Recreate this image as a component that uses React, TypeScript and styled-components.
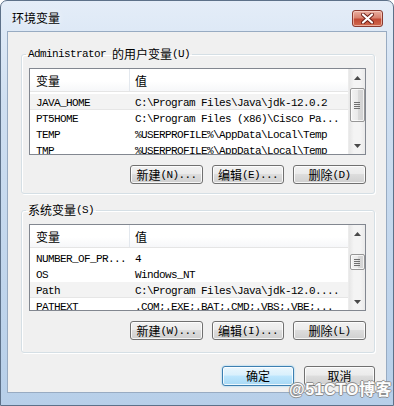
import React from 'react';
import styled, { createGlobalStyle } from 'styled-components';

const GlobalStyle = createGlobalStyle`
  html, body {
    margin: 0;
    padding: 0;
    background: #ffffff;
  }
  body {
    font-family: "Liberation Mono", "Noto Sans CJK SC", monospace;
    color: #000;
  }
`;

interface VarRow {
  name: string;
  value: string;
  shaded?: boolean;
}

const userVars: VarRow[] = [
  { name: 'JAVA_HOME', value: 'C:\\Program Files\\Java\\jdk-12.0.2', shaded: true },
  { name: 'PT5HOME', value: 'C:\\Program Files (x86)\\Cisco Pa...' },
  { name: 'TEMP', value: '%USERPROFILE%\\AppData\\Local\\Temp' },
  { name: 'TMP', value: '%USERPROFILE%\\AppData\\Local\\Temp' },
];

const systemVars: VarRow[] = [
  { name: 'NUMBER_OF_PR...', value: '4' },
  { name: 'OS', value: 'Windows_NT' },
  { name: 'Path', value: 'C:\\Program Files\\Java\\jdk-12.0....', shaded: true },
  { name: 'PATHEXT', value: '.COM;.EXE;.BAT;.CMD;.VBS;.VBE;...' },
];

// split a label into latin / han runs so each gets the right font
const splitRuns = (text: string) => {
  const runs: { han: boolean; s: string }[] = [];
  for (const ch of text) {
    const han = /[\u3000-\u9fff\uff00-\uffef]/.test(ch);
    const last = runs[runs.length - 1];
    if (last && last.han === han) last.s += ch;
    else runs.push({ han, s: ch });
  }
  return runs;
};

const Mixed = ({ text }: { text: string }): JSX.Element => (
  <>
    {splitRuns(text).map((r, i) =>
      r.han ? <Han key={i}>{r.s}</Han> : <Latin key={i}>{r.s}</Latin>,
    )}
  </>
);

const ScrollBar = ({ offset, size }: { offset: number; size: number }): JSX.Element => (
  <StyledScrollBar>
    <ArrowBox>
      <svg width="7" height="4" viewBox="0 0 7 4">
        <path d="M0 4 L3.5 0 L7 4 Z" fill="#4a4a4a" />
      </svg>
    </ArrowBox>
    <Track>
      <Thumb style={{ marginTop: offset, height: size }}>
        <svg width="6" height="7" viewBox="0 0 6 7">
          <path d="M0 0.5 H6 M0 2.5 H6 M0 4.5 H6 M0 6.5 H6" stroke="#6f6f6f" strokeWidth="1" />
        </svg>
      </Thumb>
    </Track>
    <ArrowBox>
      <svg width="7" height="4" viewBox="0 0 7 4">
        <path d="M0 0 L7 0 L3.5 4 Z" fill="#4a4a4a" />
      </svg>
    </ArrowBox>
  </StyledScrollBar>
);

interface VarListProps {
  rows: VarRow[];
  thumbOffset: number;
  thumbSize: number;
}

const VarList = ({ rows, thumbOffset, thumbSize }: VarListProps): JSX.Element => (
  <ListView>
    <ListBody>
      <HeaderRow>
        <HeaderCell $key>
          <Han>变量</Han>
        </HeaderCell>
        <HeaderCell>
          <Han>值</Han>
        </HeaderCell>
      </HeaderRow>
      <Rows>
        {rows.map((row) => (
          <Row key={row.name} $shaded={row.shaded}>
            <KeyCell>
              <Latin>{row.name}</Latin>
            </KeyCell>
            <ValueCell>
              <Latin>{row.value}</Latin>
            </ValueCell>
          </Row>
        ))}
      </Rows>
    </ListBody>
    <ScrollBar offset={thumbOffset} size={thumbSize} />
  </ListView>
);

interface VarGroupProps {
  title: string;
  rows: VarRow[];
  keys: [string, string, string];
  top: number;
  bottom: number;
  thumbOffset: number;
  thumbSize: number;
}

const VarGroup = ({ title, rows, keys, top, bottom, thumbOffset, thumbSize }: VarGroupProps): JSX.Element => (
  <Group $top={top}>
    <Legend>
      <Mixed text={title} />
    </Legend>
    <GroupBody $bottom={bottom}>
      <VarList rows={rows} thumbOffset={thumbOffset} thumbSize={thumbSize} />
      <ButtonRow>
        <Button $w={73}>
          <Mixed text={`新建(${keys[0]})...`} />
        </Button>
        <Button $w={72}>
          <Mixed text={`编辑(${keys[1]})...`} />
        </Button>
        <Button $w={73}>
          <Mixed text={`删除(${keys[2]})`} />
        </Button>
      </ButtonRow>
    </GroupBody>
  </Group>
);

const App = (): JSX.Element => (
  <>
    <GlobalStyle />
    <Window>
      <TitleBar>
        <Title>环境变量</Title>
        <CloseButton>
          <svg width="13" height="11" viewBox="0 0 13 11">
            <path d="M2 1.5 L11 9.5 M11 1.5 L2 9.5" stroke="#6b1f17" strokeWidth="4" strokeLinecap="round" />
            <path d="M2 1.5 L11 9.5 M11 1.5 L2 9.5" stroke="#ffffff" strokeWidth="2.2" strokeLinecap="round" />
          </svg>
        </CloseButton>
      </TitleBar>
      <Client>
        <VarGroup
          title="Administrator 的用户变量(U)"
          rows={userVars}
          keys={['N', 'E', 'D']}
          top={0}
          bottom={9}
          thumbOffset={2}
          thumbSize={34}
        />
        <VarGroup
          title="系统变量(S)"
          rows={systemVars}
          keys={['W', 'I', 'L']}
          top={8}
          bottom={12}
          thumbOffset={12}
          thumbSize={16}
        />
        <Footer>
          <Button $w={72} $h={20} $default>
            <Han>确定</Han>
          </Button>
          <Button $w={71} $h={20}>
            <Han>取消</Han>
          </Button>
        </Footer>
      </Client>
      <Watermark>@51CTO博客</Watermark>
    </Window>
  </>
);

const Han = styled.span`
  font-family: "Noto Sans CJK SC", "Liberation Sans", sans-serif;
  font-size: 12px;
  letter-spacing: 0;
`;

const Latin = styled.span`
  font-family: "Liberation Mono", "DejaVu Sans Mono", monospace;
  font-size: 11px;
  letter-spacing: -0.6px;
  white-space: pre;
`;

const Window = styled.div`
  position: relative;
  width: 394px;
  height: 406px;
  box-sizing: border-box;
  display: flex;
  flex-direction: column;
  padding: 0 6px 12px;
  border: 1px solid #5d7189;
  border-radius: 7px 7px 0 0;
  background: linear-gradient(180deg, #e4edf8 0%, #cfdff1 25%, #c0d5ec 70%, #b7cfe9 100%);
  overflow: hidden;
`;

const TitleBar = styled.div`
  height: 30px;
  flex-shrink: 0;
  display: flex;
  align-items: flex-start;
  justify-content: space-between;
  padding: 9px 4px 0 5px;
  box-sizing: border-box;
`;

const Title = styled.div`
  font-family: "Noto Sans CJK SC", sans-serif;
  font-size: 12px;
  line-height: 16px;
  text-shadow: 0 0 6px rgba(255, 255, 255, 0.9);
`;

const CloseButton = styled.div`
  width: 31px;
  height: 17px;
  box-sizing: border-box;
  display: flex;
  align-items: center;
  justify-content: center;
  border: 1px solid #8a3a30;
  border-radius: 3px;
  background: linear-gradient(180deg, #eab0a2 0%, #d8826f 45%, #c24a35 55%, #d06a4e 100%);
  box-shadow: inset 0 0 0 1px rgba(255, 220, 210, 0.6);
`;

const Client = styled.div`
  flex: 1;
  display: flex;
  flex-direction: column;
  background: #f0f0f0;
  border: 1px solid #98abc2;
  padding: 14px 11px 0 13px;
`;

const Group = styled.fieldset<{ $top: number }>`
  margin: ${(props) => props.$top}px 0 0;
  padding: 0;
  min-width: 0;
  border: 1px solid #d5dfe5;
  border-radius: 3px;
  box-shadow: inset 1px 1px 0 #ffffff, 1px 1px 0 #ffffff;
`;

const Legend = styled.legend`
  margin-left: 4px;
  padding: 0 2px;
  line-height: 16px;
  height: 16px;
  display: flex;
  align-items: center;
`;

const GroupBody = styled.div<{ $bottom: number }>`
  padding: 6px 8px ${(props) => props.$bottom}px 7px;
`;

const ListView = styled.div`
  height: 87px;
  box-sizing: border-box;
  border: 1px solid #828790;
  background: #ffffff;
  display: flex;
  overflow: hidden;
`;

const ListBody = styled.div`
  flex: 1;
  min-width: 0;
  display: flex;
  flex-direction: column;
  overflow: hidden;
`;

const HeaderRow = styled.div`
  height: 23px;
  flex-shrink: 0;
  box-sizing: border-box;
  display: flex;
  border-bottom: 1px solid #e5e5e5;
  background: linear-gradient(180deg, #ffffff 0%, #ffffff 55%, #f6f7f9 100%);
`;

const HeaderCell = styled.div<{ $key?: boolean }>`
  box-sizing: border-box;
  width: ${(props) => (props.$key ? '100px' : 'auto')};
  flex: ${(props) => (props.$key ? 'none' : '1')};
  padding-left: ${(props) => (props.$key ? '6px' : '5px')};
  display: flex;
  align-items: center;
  border-right: ${(props) => (props.$key ? '1px solid #e3e8ee' : 'none')};
`;

const Rows = styled.div`
  padding-top: 2px;
`;

const Row = styled.div<{ $shaded?: boolean }>`
  height: 16px;
  display: flex;
  align-items: center;
  background: ${(props) => (props.$shaded ? '#f3f3f3' : 'transparent')};
  border-bottom: ${(props) => (props.$shaded ? '1px solid #e6e6e6' : 'none')};
  box-sizing: border-box;
`;

const KeyCell = styled.div`
  width: 100px;
  flex: none;
  box-sizing: border-box;
  padding-left: 6px;
  overflow: hidden;
  white-space: nowrap;
`;

const ValueCell = styled.div`
  flex: 1;
  min-width: 0;
  padding-left: 5px;
  overflow: hidden;
  white-space: nowrap;
`;

const StyledScrollBar = styled.div`
  width: 17px;
  flex: none;
  display: flex;
  flex-direction: column;
  background: linear-gradient(90deg, #e6e6e6 0%, #f4f4f4 30%, #f4f4f4 70%, #eaeaea 100%);
  border-left: 1px solid #ececec;
  box-sizing: border-box;
`;

const ArrowBox = styled.div`
  height: 17px;
  flex: none;
  display: flex;
  align-items: center;
  justify-content: center;
`;

const Track = styled.div`
  flex: 1;
  display: flex;
  flex-direction: column;
  align-items: center;
`;

const Thumb = styled.div`
  width: 15px;
  box-sizing: border-box;
  display: flex;
  align-items: center;
  justify-content: center;
  border: 1px solid #979797;
  border-radius: 2px;
  background: linear-gradient(90deg, #f3f3f3 0%, #e9e9e9 50%, #d9d9d9 51%, #d2d2d2 100%);
  box-shadow: inset 0 0 0 1px rgba(255, 255, 255, 0.7);
`;

const ButtonRow = styled.div`
  display: flex;
  justify-content: flex-end;
  gap: 9px;
  margin-top: 10px;
  padding-right: 0px;
`;

const Button = styled.div<{ $w: number; $h?: number; $default?: boolean }>`
  width: ${(props) => props.$w}px;
  height: ${(props) => props.$h ?? 19}px;
  box-sizing: border-box;
  display: flex;
  align-items: center;
  justify-content: center;
  line-height: 16px;
  border: 1px solid ${(props) => (props.$default ? '#3c7fb1' : '#707070')};
  border-radius: 3px;
  background: ${(props) =>
    props.$default
      ? 'linear-gradient(180deg, #eaf6fd 0%, #d9f0fc 45%, #bee6fd 50%, #a7d9f5 100%)'
      : 'linear-gradient(180deg, #f2f2f2 0%, #ebebeb 45%, #dddddd 50%, #cfcfcf 100%)'};
  box-shadow: ${(props) =>
    props.$default
      ? 'inset 0 0 0 1px rgba(255, 255, 255, 0.8), 0 0 2px #7ac6f0'
      : 'inset 0 0 0 1px rgba(255, 255, 255, 0.8)'};
`;

const Footer = styled.div`
  display: flex;
  justify-content: flex-end;
  gap: 10px;
  margin-top: 13px;
`;

const Watermark = styled.div`
  position: absolute;
  right: 1px;
  bottom: 6px;
  font-family: "Liberation Sans", "Noto Sans CJK SC", sans-serif;
  font-size: 16px;
  font-weight: 700;
  letter-spacing: 0.5px;
  line-height: 18px;
  color: #ffffff;
  text-shadow: 1px 0 0 #8c8c8c, -1px 0 0 #8c8c8c, 0 1px 0 #8c8c8c, 0 -1px 0 #8c8c8c;
  opacity: 0.95;
`;

export default App;
